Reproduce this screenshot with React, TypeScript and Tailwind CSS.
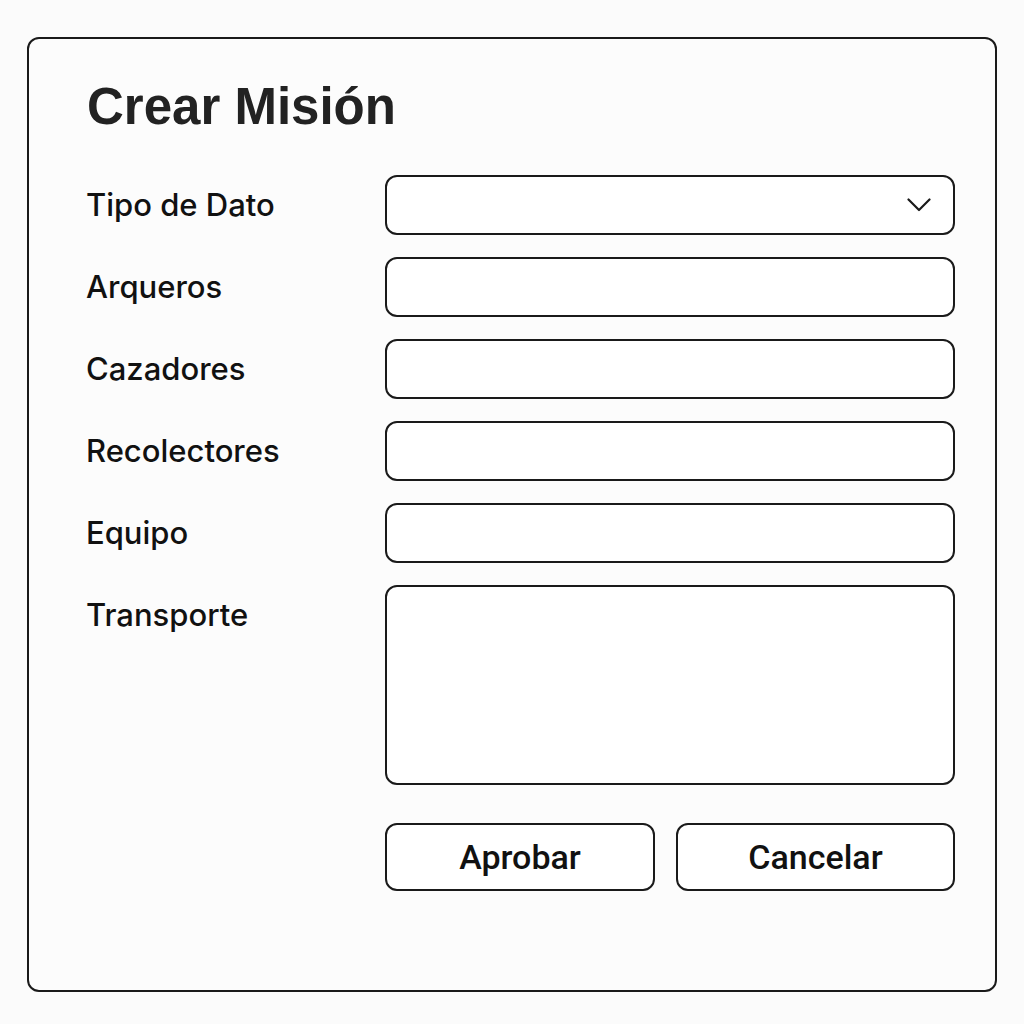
const CAMPOS = ["Arqueros", "Cazadores", "Recolectores", "Equipo"];

export default function App() {
  return (
    <div className="min-h-[1024px] w-full bg-[#fbfbfb] pt-[37px] pl-[27px] font-['Inter','Liberation_Sans',sans-serif] text-[#111]">
      <div className="flex h-[955px] w-[970px] flex-col rounded-[12px] border-2 border-[#1a1a1a] bg-[#fcfcfc] pt-[42px] pr-[40px] pl-[57px]">
        <h1 className="pl-px font-['Liberation_Sans',sans-serif] text-[51px] leading-none font-bold text-[#222]">Crear Misión</h1>

        <form className="mt-[43px] grid grid-cols-[299px_1fr] gap-y-[22px]">
          <label className="flex h-[60px] items-center text-[31px] font-medium">Tipo de Dato</label>
          <div className="flex h-[60px] items-center justify-end rounded-[12px] border-2 border-[#1a1a1a] bg-white pr-[22px]">
            <svg width="24" height="14" viewBox="0 0 24 14" fill="none" stroke="#1a1a1a" strokeWidth="2.2" strokeLinecap="round" strokeLinejoin="round">
              <polyline points="1.5,1.5 12,12 22.5,1.5" />
            </svg>
          </div>

          {CAMPOS.map((campo) => (
            <div key={campo} className="contents">
              <label className="flex h-[60px] items-center text-[31px] font-medium">{campo}</label>
              <input className="h-[60px] rounded-[12px] border-2 border-[#1a1a1a] bg-white px-4 text-[24px] outline-none" />
            </div>
          ))}

          <label className="flex h-[60px] items-center text-[31px] font-medium">Transporte</label>
          <textarea className="h-[200px] resize-none rounded-[12px] border-2 border-[#1a1a1a] bg-white p-4 text-[24px] outline-none" />

          <div />
          <div className="mt-[16px] flex gap-[21px]">
            <button type="button" className="h-[68px] w-[270px] rounded-[12px] border-2 border-[#1a1a1a] bg-white font-['Roboto',sans-serif] text-[34px] font-medium">
              Aprobar
            </button>
            <button type="button" className="h-[68px] flex-1 rounded-[12px] border-2 border-[#1a1a1a] bg-white font-['Roboto',sans-serif] text-[34px] font-medium">
              Cancelar
            </button>
          </div>
        </form>
      </div>
    </div>
  );
}
